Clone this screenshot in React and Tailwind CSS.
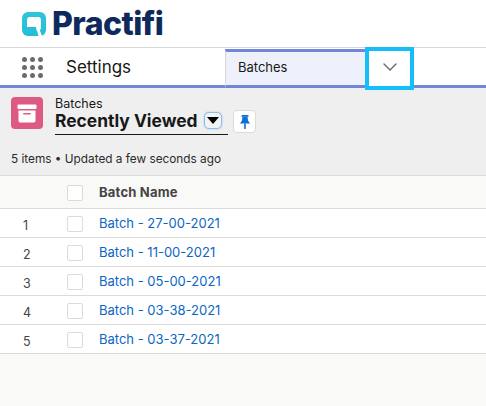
import { ChevronDown } from 'lucide-react'

const rows = [
  'Batch - 27-00-2021',
  'Batch - 11-00-2021',
  'Batch - 05-00-2021',
  'Batch - 03-38-2021',
  'Batch - 03-37-2021',
]

function Logo() {
  return (
    <svg width="24" height="24" viewBox="0 0 24 24" className="shrink-0">
      <defs>
        <linearGradient id="logoFill" x1="0" y1="0" x2="0" y2="1">
          <stop offset="0" stopColor="#2fc6da" />
          <stop offset="1" stopColor="#24bdd6" />
        </linearGradient>
      </defs>
      <rect width="24" height="24" rx="6" fill="url(#logoFill)" />
      <path fill="white" d="M5 15V8a3 3 0 0 1 3-3h8a3 3 0 0 1 3 3v7.500a3 3 0 0 1-3 3h-1.500l-0.500-3.500z" />
      <path fill="white" d="M14.800 17.500h2.700l2.500 6.500h-3.500z" />
    </svg>
  )
}

function Dots() {
  return (
    <div className="grid grid-cols-3 gap-[3px] w-[21px]">
      {Array.from({ length: 9 }).map((_, i) => (
        <span key={i} className="w-[5px] h-[5px] rounded-full bg-[#6b6b6b]" />
      ))}
    </div>
  )
}

function Checkbox() {
  return <span className="block mt-[2px] w-4 h-4 bg-white border border-[#dddbda] rounded-[2px]" />
}

export default function App() {
  return (
    <div className="w-[486px] h-[406px] overflow-hidden bg-[#f9f9f7] text-[#181818] font-['Inter','Liberation_Sans',sans-serif]">
      {/* logo */}
      <div className="h-[47px] bg-white flex items-center pl-[22px] gap-[6px]">
        <Logo />
        <span className="text-[#0e2a5c] text-[32px] leading-none font-extrabold tracking-[-0.5px]">Practifi</span>
      </div>

      {/* nav */}
      <div className="relative h-[41px] bg-white border-t border-[#d8d8d8] border-b-[3px] border-b-[#7186d8] flex">
        <div className="w-[225px] flex items-center pl-[22px] gap-[23px] pt-[2px]">
          <Dots />
          <span className="text-[17px]">Settings</span>
        </div>
        <div className="w-[140px] mt-[1px] -mb-[3px] bg-[#eef1fb] border-t-[3px] border-t-[#7186d8] border-b-[3px] border-b-[#7186d8] border-l border-l-[#d8d8d8] flex items-center pl-[12px] pb-[1px] text-[13px]">
          Batches
        </div>
        <div className="absolute left-[365px] -top-[1px] w-[49px] h-[43px] bg-white border-[4px] border-[#15bdf9] flex items-center justify-center pb-[3px] text-[#666]">
          <ChevronDown size={24} strokeWidth={1.4} />
        </div>
      </div>

      {/* list header */}
      <div className="h-[88px] bg-[#efefef] border-b border-[#dddbda] pl-[11px] pt-[9px]">
        <div className="flex">
          <div className="w-8 h-8 rounded-[4px] bg-[#dd5b82] flex items-center justify-center">
            <svg width="20" height="19" viewBox="0 0 20 19" fill="white">
              <rect x="0.500" y="0.500" width="19" height="4.500" rx="1" />
              <path d="M1.500 6.500H18.500V16.500C18.500 17.300 18 18.500 17 18.500H3C2 18.500 1.500 17.300 1.500 16.500Z" />
              <rect x="6" y="9" width="8" height="1.600" rx="0.800" fill="#dd5b82" />
            </svg>
          </div>
          <div className="ml-3 w-[173px] h-[38px] border-b border-[#181818]">
            <div className="text-[12.500px] leading-[13px]">Batches</div>
            <div className="flex items-center whitespace-nowrap text-[17.400px] leading-[21px] font-bold">
              Recently Viewed
              <span className="ml-[6px] w-[18px] h-[17px] rounded-[5px] border border-[#8fbdec] bg-[#f3f3f3] shadow-[0_0_2px_#9cc3ea] flex items-center justify-center">
                <span className="w-0 h-0 border-x-[6px] border-x-transparent border-t-[7px] border-t-black" />
              </span>
            </div>
          </div>
          <div className="ml-[5px] mt-[13px] w-[23px] h-[23px] rounded-[4px] bg-white border border-[#dddbda] flex items-center justify-center">
            <svg width="10" height="14" viewBox="0 0 10 14" fill="#0b6fd3">
              <rect x="1.500" y="0" width="7" height="1.800" rx="0.500" />
              <path d="M2.500 1.800H7.500L8 5.500L10 8.500H0L2 5.500Z" />
              <rect x="4.200" y="8.500" width="1.600" height="5.500" />
            </svg>
          </div>
        </div>
        <div className="mt-[17px] text-[11.800px] leading-[14px] text-[#2b2b2b]">5 items • Updated a few seconds ago</div>
      </div>

      {/* table */}
      <div className="h-[33px] bg-[#f9f9f7] border-b border-[#dddbda] flex items-center">
        <div className="w-[67px]" />
        <Checkbox />
        <span className="ml-4 pt-[2px] text-[13px] tracking-[0.2px] font-bold text-[#444]">Batch Name</span>
      </div>
      {rows.map((name, i) => (
        <div key={name} className="h-[29px] bg-white border-b border-[#dddbda] flex items-center">
          <span className="w-[67px] pl-[23px] pt-[7px] text-[12.500px] text-[#444]">{i + 1}</span>
          <Checkbox />
          <span className="ml-4 pt-[2px] text-[13px] text-[#0b66c4]">{name}</span>
        </div>
      ))}
    </div>
  )
}
